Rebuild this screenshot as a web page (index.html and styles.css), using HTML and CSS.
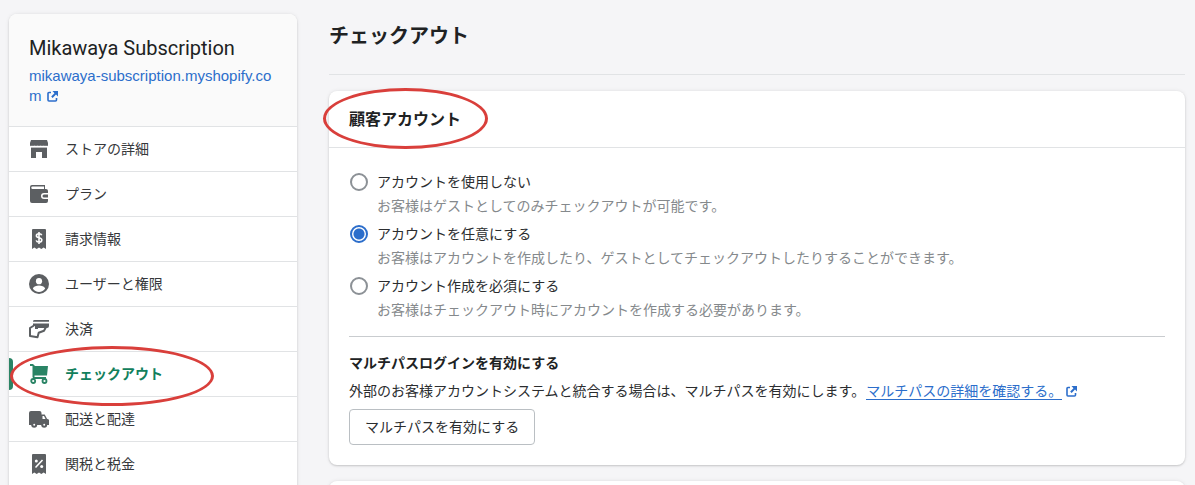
FILE: index.html
```html
<!DOCTYPE html>
<html lang="ja">
<head>
<meta charset="utf-8">
<title>チェックアウト</title>
<link rel="stylesheet" href="styles.css">
</head>
<body>
<svg class="sprite" aria-hidden="true">
  <symbol id="external" viewBox="0 0 11 11">
    <path d="M4 1.500H2a1 1 0 0 0-1 1V9a1 1 0 0 0 1 1h6.500a1 1 0 0 0 1-1V7" fill="none" stroke="currentColor" stroke-width="1.600"/>
    <path d="M5.500 0H11v5.500L9 3.600 5.600 7 4.200 5.600 7.500 2.200z" fill="currentColor"/>
  </symbol>
</svg>
<div class="layout">
  <aside class="sidebar">
    <header class="store">
      <h2 class="store-name">Mikawaya Subscription</h2>
      <a class="store-link" href="#">mikawaya-subscription.myshopify.com <svg class="external"><use href="#external"/></svg></a>
    </header>
    <nav>
      <ul class="nav">
        <li class="nav-item"><a class="nav-link" href="#">
          <svg class="icon" viewBox="0 0 20 20"><path d="M2 1h16l1 3v2c0 1.800-3.800 2-4.200.4-.5 1.400-2.700 1.400-3.200 0-.5 1.400-2.700 1.400-3.200 0-.5 1.400-2.700 1.400-3.200 0C4.800 8 1 7.800 1 6V4z"/><path d="M2 8.500h16V19h-5v-6H7v6H2z"/><path class="cut" d="M2 6.800h16v1.400H2z"/></svg>
          ストアの詳細</a></li>
        <li class="nav-item"><a class="nav-link" href="#">
          <svg class="icon" viewBox="0 0 20 20"><path d="M3 1h13v4h1a2 2 0 0 1 2 2v2h-4a3 3 0 0 0 0 6h4v2a2 2 0 0 1-2 2H3a2 2 0 0 1-2-2V3a2 2 0 0 1 2-2z"/><path class="cut" d="M3.500 2.600H15V5H3.500a1.200 1.200 0 0 1 0-2.400z"/><path d="M15 10.500h4v3h-4a1.500 1.500 0 0 1 0-3z"/></svg>
          プラン</a></li>
        <li class="nav-item"><a class="nav-link" href="#">
          <svg class="icon" viewBox="0 0 20 20"><path d="M4 0h12a1 1 0 0 1 1 1v19l-2.300-1.600L12.300 20 10 18.400 7.700 20l-2.400-1.600L3 20V1a1 1 0 0 1 1-1z"/><path class="cut-line" d="M12.700 6.300C12.400 5.100 11.300 4.800 10 4.800c-1.600 0-2.600.8-2.600 2 0 1.400 1.300 1.700 2.600 2s2.800.8 2.800 2.200c0 1.300-1.200 2.100-2.800 2.100-1.500 0-2.500-.5-2.800-1.700M10 3v12"/></svg>
          請求情報</a></li>
        <li class="nav-item"><a class="nav-link" href="#">
          <svg class="icon" viewBox="0 0 20 20"><circle cx="10" cy="10" r="10"/><circle class="cut" cx="10" cy="7.200" r="3.100"/><path class="cut" d="M3.800 14.600C5 12.400 7.300 11.600 10 11.600s5 .8 6.200 3C14.800 16.700 12.600 18 10 18s-4.800-1.300-6.200-3.400z"/></svg>
          ユーザーと権限</a></li>
        <li class="nav-item"><a class="nav-link" href="#">
          <svg class="icon" viewBox="0 0 20 20"><path class="hand" d="M5 6.500L1 9v8l7.500 1.200 1.200-4.400 5.300-2L17 8"/><path d="M5.500 1H20v1.800H4A1.500 1.500 0 0 1 5.500 1zM4 4.500h16v2.500a2 2 0 0 1-2 2H9v1H6V7H4z"/></svg>
          決済</a></li>
        <li class="nav-item nav-item-current"><a class="nav-link" href="#" aria-current="page">
          <svg class="icon" viewBox="0 0 20 20"><path d="M1 0h3.500v2H19l-1 9.500H5V2H1z"/><path class="cart" d="M4.500 1v12.500M4 14h13"/><circle class="wheel" cx="4.200" cy="17" r="2"/><circle class="wheel" cx="15.500" cy="17" r="2"/></svg>
          チェックアウト</a><span class="mark mark-nav"></span></li>
        <li class="nav-item"><a class="nav-link" href="#">
          <svg class="icon" viewBox="0 0 20 20"><path d="M2 2h8.500a2 2 0 0 1 2 2v1.500h3.200L18 9.800l2 1V16h-2a3 3 0 0 1-5.500 0H8a3 3 0 0 1-5.500 0H0V4a2 2 0 0 1 2-2z"/><path class="cut" d="M13.500 7H15l1.500 3h-3z"/><circle class="tyre" cx="5.200" cy="15.700" r="2"/><circle class="tyre" cx="15.200" cy="15.700" r="2"/></svg>
          配送と配達</a></li>
        <li class="nav-item"><a class="nav-link" href="#">
          <svg class="icon" viewBox="0 0 20 20"><path d="M4 0h12a1 1 0 0 1 1 1v19l-2.300-1.600L12.300 20 10 18.400 7.700 20l-2.400-1.600L3 20V1a1 1 0 0 1 1-1z"/><path class="cut-line" d="M13.500 6l-7 7.500"/><circle class="cut" cx="7.300" cy="7" r="1.500"/><circle class="cut" cx="12.700" cy="12.600" r="1.500"/></svg>
          関税と税金</a></li>
      </ul>
    </nav>
  </aside>
  <main class="main">
    <h1 class="page-title">チェックアウト</h1>
    <section class="card">
      <header class="card-header">
        <h2 class="card-title">顧客アカウント</h2>
        <span class="mark mark-title"></span>
      </header>
      <div class="card-body">
        <div class="options">
          <div class="option">
            <input class="radio" type="radio" name="account" id="none" aria-describedby="none-help">
            <div><label class="option-label" for="none">アカウントを使用しない</label>
            <p class="help" id="none-help">お客様はゲストとしてのみチェックアウトが可能です。</p></div>
          </div>
          <div class="option">
            <input class="radio" type="radio" name="account" id="optional" aria-describedby="optional-help" checked>
            <div><label class="option-label" for="optional">アカウントを任意にする</label>
            <p class="help" id="optional-help">お客様はアカウントを作成したり、ゲストとしてチェックアウトしたりすることができます。</p></div>
          </div>
          <div class="option">
            <input class="radio" type="radio" name="account" id="required" aria-describedby="required-help">
            <div><label class="option-label" for="required">アカウント作成を必須にする</label>
            <p class="help" id="required-help">お客様はチェックアウト時にアカウントを作成する必要があります。</p></div>
          </div>
        </div>
        <div class="multipass">
          <h3 class="subheading">マルチパスログインを有効にする</h3>
          <p class="text">外部のお客様アカウントシステムと統合する場合は、マルチパスを有効にします。<a class="text-link" href="#"><span class="underlined">マルチパスの詳細を確認する。</span><svg class="external"><use href="#external"/></svg></a></p>
          <button class="button" type="button">マルチパスを有効にする</button>
        </div>
      </div>
    </section>
    <section class="card card-next"></section>
  </main>
</div>
</body>
</html>
```
FILE: styles.css
```css
* { box-sizing: border-box; }
html { height: 100%; }
body {
  height: 100%;
  margin: 0;
  background: #f5f5f7;
  color: #2b2d2f;
  font: 14px/20px Inter, "Noto Sans CJK JP", sans-serif;
}
h1, h2, h3, p, ul { margin: 0; padding: 0; }
h1, h2, h3 { color: #202223; }
.sprite { position: absolute; width: 0; height: 0; }
.layout { display: flex; gap: 32px; height: 100%; padding: 14px 10px 0 9px; overflow: hidden; }
.sidebar, .card {
  background: #fff;
  border-radius: 8px;
  box-shadow: 0 0 4px rgba(23, 24, 24, .08), 0 1px 2px rgba(0, 0, 0, .16);
}
.sidebar { flex: 0 0 288px; align-self: flex-start; padding-bottom: 20px; }
.store { padding: 20px; background: #fafafa; border-radius: 8px 8px 0 0; }
.store-name { margin-bottom: 4px; font-family: Roboto, sans-serif; font-size: 20px; font-weight: 400; line-height: 28px; }
.store-link { color: #2c6ecb; font-family: "Liberation Sans", sans-serif; font-size: 15px; text-decoration: none; word-break: break-all; }
.external { width: 11px; height: 11px; margin-left: 1px; vertical-align: -1px; }

.nav { list-style: none; }
.nav-item { position: relative; border-top: 1px solid #e1e3e5; }
.nav-link {
  display: flex;
  align-items: center;
  gap: 16px;
  height: 44px;
  padding: 0 20px;
  color: #36383b;
  text-decoration: none;
}
.icon { flex: none; width: 20px; height: 20px; fill: #5c5f62; color: #5c5f62; overflow: visible; }
.icon .cut { fill: #fff; }
.icon .cut-line { fill: none; stroke: #fff; stroke-width: 1.6; }
.icon .hand { fill: #fff; stroke: currentColor; stroke-width: 2; stroke-linejoin: round; }
.icon .cart { fill: none; stroke: currentColor; stroke-width: 2; }
.icon .wheel { fill: #fff; stroke: currentColor; stroke-width: 1.8; }
.icon .tyre { fill: #fff; stroke: currentColor; stroke-width: 2; }
.nav-item-current .nav-link { color: #12805c; font-weight: 700; }
.nav-item-current .icon { fill: #2a8465; color: #2a8465; }
.nav-item-current::before {
  content: "";
  position: absolute;
  inset: 6px auto 6px 0;
  width: 4px;
  border-radius: 0 4px 4px 0;
  background: #2a8465;
}
.mark { position: absolute; z-index: 1; border: 3px solid #d93f3b; border-radius: 50%; pointer-events: none; }
.mark-nav { top: -6px; left: 1px; width: 204px; height: 60px; }
.mark-title { top: -3px; left: -6px; width: 165px; height: 61px; }

.main { flex: 1; min-width: 0; }
.page-title { padding: 7px 0 23px; border-bottom: 1px solid #e1e3e5; font-size: 20px; line-height: 30px; }
.card { margin-top: 16px; }
.card-next { height: 80px; }
.card-header { position: relative; padding: 16px 20px; border-bottom: 1px solid #e1e3e5; }
.card-title { font-size: 16px; line-height: 24px; }
.card-body { padding: 20px; }
.option { display: flex; gap: 9px; padding: 4px 0; }
.radio {
  appearance: none;
  flex: none;
  width: 18px;
  height: 18px;
  margin: 1px 0 0 1px;
  border: 2px solid #8c9196;
  border-radius: 50%;
  background: #fff;
}
.radio:checked { border-color: #2c6ecb; background: radial-gradient(circle, #2c6ecb 5px, #fff 6px); }
.option-label { display: block; }
.help { margin-top: 4px; color: #85898c; }
.multipass { margin-top: 12px; padding-top: 16px; border-top: 1px solid #c9cccf; }
.subheading { font-size: 14px; line-height: 20px; }
.text { margin: 8px 0; }
.text-link { margin-left: 1px; color: #2c6ecb; text-decoration: none; }
.underlined { border-bottom: 1px solid #2c6ecb; }
.text-link .external { margin-left: 4px; }
.button {
  display: block;
  height: 36px;
  padding: 0 15px;
  border: 1px solid #babfc3;
  border-radius: 4px;
  background: #fff;
  color: #2b2d2f;
  font: inherit;
}
```
